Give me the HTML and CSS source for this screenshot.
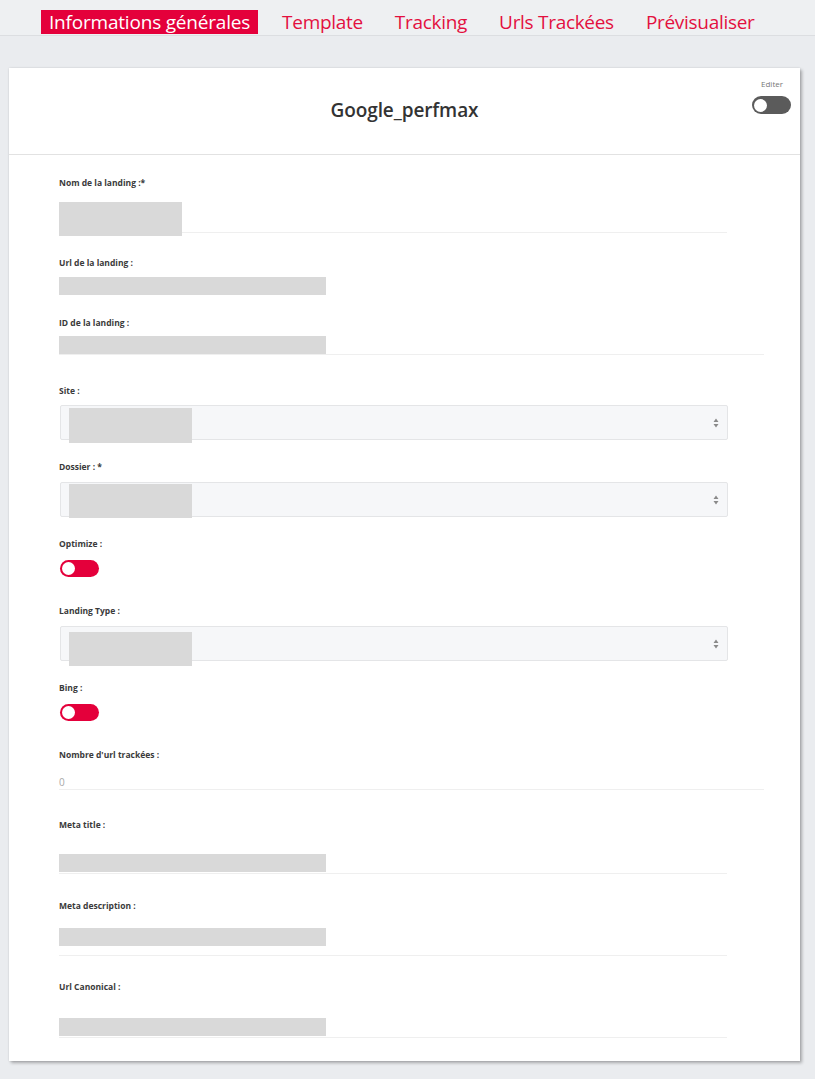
FILE: index.html
```html
<!DOCTYPE html>
<html lang="fr">
<head>
<meta charset="utf-8">
<title>Google_perfmax</title>
<link rel="stylesheet" href="styles.css">
</head>
<body>
<nav class="tabs">
  <a class="tab tab-active">Informations générales</a>
  <a class="tab">Template</a>
  <a class="tab">Tracking</a>
  <a class="tab">Urls Trackées</a>
  <a class="tab">Prévisualiser</a>
</nav>

<main class="card">
  <header class="card-head">
    <div></div>
    <h1 class="card-title">Google_perfmax</h1>
    <div class="edit">
      <span class="edit-label">Editer</span>
      <span class="switch switch-gray"><span class="knob"></span></span>
    </div>
  </header>

  <section class="form">
    <div class="field f-nom">
      <label class="lbl">Nom de la landing :*</label>
      <div class="row row-nom"><span class="mask mask-short mask-nom"></span></div>
    </div>

    <div class="field f-url">
      <label class="lbl">Url de la landing :</label>
      <div class="row row-url"><span class="mask mask-long"></span></div>
    </div>

    <div class="field f-id">
      <label class="lbl">ID de la landing :</label>
      <div class="row row-id"><span class="mask mask-long"></span></div>
    </div>

    <div class="field f-site">
      <label class="lbl">Site :</label>
      <div class="select sel-site"><span class="mask mask-sel"></span><svg class="arrows" viewBox="0 0 6 10" width="6" height="10"><path d="M3 0.5 L5.5 4 H0.5 Z M3 9.5 L5.5 6 H0.5 Z" fill="#8a8a8a"/></svg></div>
    </div>

    <div class="field f-dossier">
      <label class="lbl">Dossier : *</label>
      <div class="select sel-dossier"><span class="mask mask-sel"></span><svg class="arrows" viewBox="0 0 6 10" width="6" height="10"><path d="M3 0.5 L5.5 4 H0.5 Z M3 9.5 L5.5 6 H0.5 Z" fill="#8a8a8a"/></svg></div>
    </div>

    <div class="field f-opt">
      <label class="lbl">Optimize :</label>
      <span class="switch switch-red switch-form"><span class="knob"></span></span>
    </div>

    <div class="field f-type">
      <label class="lbl">Landing Type :</label>
      <div class="select sel-type"><span class="mask mask-sel"></span><svg class="arrows" viewBox="0 0 6 10" width="6" height="10"><path d="M3 0.5 L5.5 4 H0.5 Z M3 9.5 L5.5 6 H0.5 Z" fill="#8a8a8a"/></svg></div>
    </div>

    <div class="field f-bing">
      <label class="lbl">Bing :</label>
      <span class="switch switch-red switch-form"><span class="knob"></span></span>
    </div>

    <div class="field f-nb">
      <label class="lbl">Nombre d'url trackées :</label>
      <div class="row row-nb"><span class="value">0</span></div>
    </div>

    <div class="field f-mt">
      <label class="lbl">Meta title :</label>
      <div class="row row-mt"><span class="mask mask-long"></span></div>
    </div>

    <div class="field f-md">
      <label class="lbl">Meta description :</label>
      <div class="row row-md"><span class="mask mask-long"></span></div>
    </div>

    <div class="field f-uc">
      <label class="lbl">Url Canonical :</label>
      <div class="row row-uc"><span class="mask mask-long"></span></div>
    </div>
  </section>
</main>
</body>
</html>
```

FILE: styles.css
```css
* { box-sizing: border-box; }

html, body {
  margin: 0;
  padding: 0;
}

body {
  background: #eaecef;
  font-family: "Open Sans", "Noto Sans", "Liberation Sans", sans-serif;
  color: #333;
  width: 815px;
  height: 1079px;
  overflow: hidden;
}

/* ---------- tabs ---------- */
.tabs {
  display: flex;
  gap: 16px;
  padding: 10px 0 0 41px;
  height: 36px;
  border-bottom: 1px solid #dcdee1;
  background: #eef0f2;
}

.tab {
  display: block;
  height: 24px;
  padding: 0 8px;
  font-size: 19px;
  line-height: 24px;
  color: #e3103f;
  letter-spacing: -0.3px;
  white-space: nowrap;
  cursor: pointer;
}

.tab-active {
  background: #e4003b;
  color: #fff;
  letter-spacing: -0.2px;
}

/* ---------- card ---------- */
.card {
  margin: 32px 0 0 9px;
  width: 791px;
  background: #fff;
  box-shadow: 2px 2px 3px rgba(0, 0, 0, 0.28), 0 0 2px rgba(0, 0, 0, 0.12);
}

.card-head {
  display: grid;
  grid-template-columns: 1fr auto 1fr;
  align-items: center;
  height: 87px;
  padding-bottom: 3px;
  border-bottom: 1px solid #e2e2e2;
}

.card-title {
  margin: 0;
  font-size: 19px;
  font-weight: 600;
  color: #333;
  letter-spacing: -0.1px;
}

.edit {
  justify-self: end;
  align-self: start;
  display: flex;
  flex-direction: column;
  align-items: flex-end;
  padding: 11px 9px 0 0;
}

.edit-label {
  font-size: 8px;
  line-height: 10px;
  color: #777;
  margin-right: 8px;
}

/* ---------- switches ---------- */
.switch {
  display: flex;
  align-items: center;
  width: 39px;
  height: 18px;
  border-radius: 9px;
  padding: 0 2px;
}

.switch-gray {
  background: #5b5b5b;
  margin-top: 7px;
}

.switch-red {
  background: #e4003b;
  height: 17px;
}

.knob {
  width: 13px;
  height: 13px;
  border-radius: 50%;
  background: #fff;
}

/* ---------- form ---------- */
.form {
  padding: 22px 0 23px 50px;
}

.field {
  display: flex;
  flex-direction: column;
  align-items: flex-start;
}

.lbl {
  display: block;
  font-size: 8.5px;
  font-weight: 700;
  line-height: 12px;
  color: #3a3a3a;
}

.mask {
  display: block;
  background: #d9d9d9;
  flex: none;
}

.mask-long { width: 267px; height: 18px; }
.mask-short { width: 123px; height: 34px; }

.row {
  display: flex;
  align-items: flex-start;
  width: 668px;
}

/* field 1 */
.row-nom {
  margin-top: 13px;
  height: 31px;
  border-bottom: 1px solid #efefef;
}

/* field 2 */
.f-url { margin-top: 24px; }
.row-url { margin-top: 8px; height: 18px; }

/* field 3 */
.f-id { margin-top: 22px; }
.row-id {
  margin-top: 7px;
  height: 19px;
  width: 705px;
  border-bottom: 1px solid #efefef;
}

/* selects */
.select {
  display: flex;
  align-items: flex-start;
  justify-content: space-between;
  width: 668px;
  height: 35px;
  margin-left: 1px;
  padding: 0 8px 0 8px;
  background: #f6f7f9;
  border: 1px solid #e4e5e7;
  border-radius: 2px;
}

.select .arrows {
  align-self: center;
}

.mask-sel {
  width: 123px;
  height: 35px;
}

.f-site { margin-top: 30px; }
.sel-site { margin-top: 8px; }
.sel-site .mask-sel { margin-top: 2px; }

.f-dossier { margin-top: 21px; }
.sel-dossier { margin-top: 9px; }
.sel-dossier .mask-sel { margin-top: 1px; height: 34px; }

.f-opt { margin-top: 21px; }
.switch-form { margin-top: 10px; margin-left: 1px; }

.f-type { margin-top: 28px; }
.sel-type { margin-top: 9px; }
.sel-type .mask-sel { margin-top: 5px; height: 34px; }

.f-bing { margin-top: 21px; }

/* nombre d'url */
.f-nb { margin-top: 28px; }
.row-nb {
  margin-top: 10px;
  height: 19px;
  width: 705px;
  padding-top: 2px;
  border-bottom: 1px solid #efefef;
}

.value {
  font-size: 10px;
  line-height: 18px;
  color: #a8a8a8;
}

/* meta title */
.f-mt { margin-top: 29px; }
.row-mt {
  margin-top: 4px;
  height: 39px;
  padding-top: 19px;
  border-bottom: 1px solid #efefef;
}

/* meta description */
.f-md { margin-top: 26px; }
.row-md {
  margin-top: 4px;
  height: 40px;
  padding-top: 12px;
  border-bottom: 1px solid #efefef;
}

/* url canonical */
.f-uc { margin-top: 25px; }
.row-uc {
  margin-top: 4px;
  height: 41px;
  padding-top: 21px;
  border-bottom: 1px solid #efefef;
}
```
